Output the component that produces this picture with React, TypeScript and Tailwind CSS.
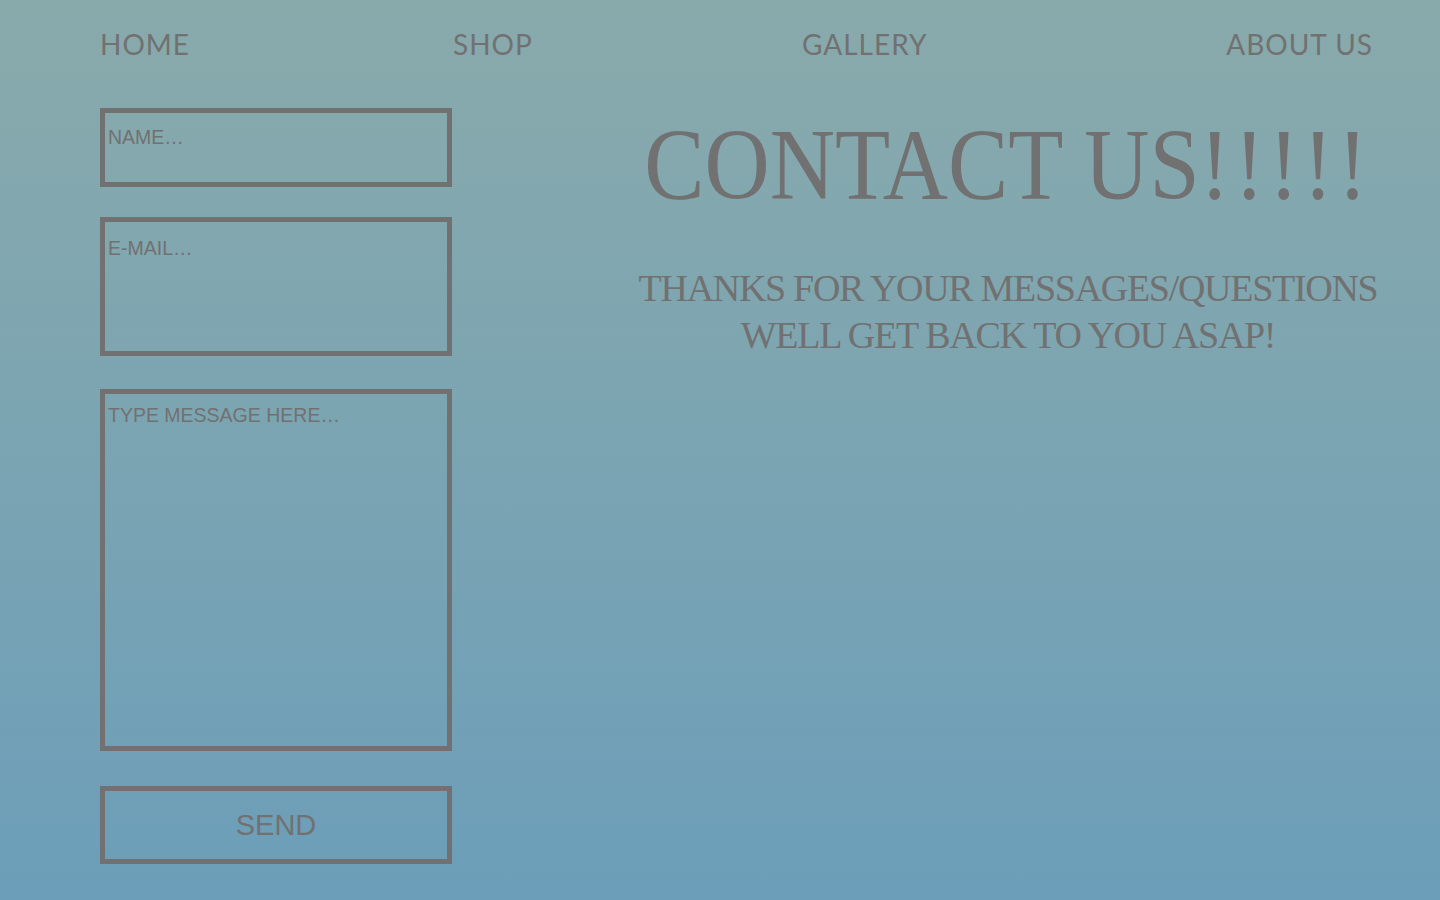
import React from 'react';

const navItems = [
  { label: 'HOME', cls: 'w-[353px]' },
  { label: 'SHOP', cls: 'w-[349px]' },
  { label: 'GALLERY', cls: 'flex-1' },
];

export default function App() {
  return (
    <div className="h-[900px] w-full overflow-hidden bg-gradient-to-b from-[#89aaab] to-[#6c9eb9] text-[#717171]">
      <nav className="flex pl-[100px] pr-[68px] pt-[30px] font-['Lato',sans-serif] text-[28px] leading-[28px] tracking-[1px]">
        {navItems.map((item) => (
          <a key={item.label} href="#" className={item.cls}>
            {item.label}
          </a>
        ))}
        <a href="#" className="-mr-[1px]">ABOUT US</a>
      </nav>

      <main className="flex pl-[100px] mt-[50px]">
        <form
          className="flex flex-col w-[352px] font-['Liberation_Sans',Arial,sans-serif] text-[19.5px]"
          onSubmit={(e) => e.preventDefault()}
        >
          <div className="h-[79px] border-[5px] border-[#717171] pl-[3px] pt-[10px]">
            <input
              placeholder="NAME…"
              className="w-full h-[22px] leading-[22px] bg-transparent outline-none placeholder:text-[#717171]"
            />
          </div>
          <div className="h-[139px] mt-[30px] border-[5px] border-[#717171] pl-[3px] pt-[12px]">
            <input
              placeholder="E-MAIL…"
              className="w-full h-[22px] leading-[22px] bg-transparent outline-none placeholder:text-[#717171]"
            />
          </div>
          <div className="h-[362px] mt-[33px] border-[5px] border-[#717171]">
            <textarea
              placeholder="TYPE MESSAGE HERE…"
              className="w-full h-full resize-none pl-[3px] pt-[10px] leading-[22px] bg-transparent outline-none placeholder:text-[#717171]"
            />
          </div>
          <button
            type="submit"
            className="h-[78px] mt-[35px] border-[5px] border-[#717171] text-[29px] leading-none"
          >
            SEND
          </button>
        </form>

        <section className="flex-1 ml-[124px] text-center font-['Liberation_Serif','Times_New_Roman',serif]">
          <h1 className="mt-[6px] text-[102px] leading-none whitespace-nowrap">
            <span className="inline-block scale-x-[0.885] origin-center">
              CONTACT US<span className="tracking-[5px]">!!!!!</span>
            </span>
          </h1>
          <div className="mt-[49px] text-[38px] leading-[47px] tracking-[-1.3px] whitespace-nowrap">
            <p>THANKS FOR YOUR MESSAGES/QUESTIONS</p>
            <p>WELL GET BACK TO YOU ASAP!</p>
          </div>
        </section>
      </main>
    </div>
  );
}
